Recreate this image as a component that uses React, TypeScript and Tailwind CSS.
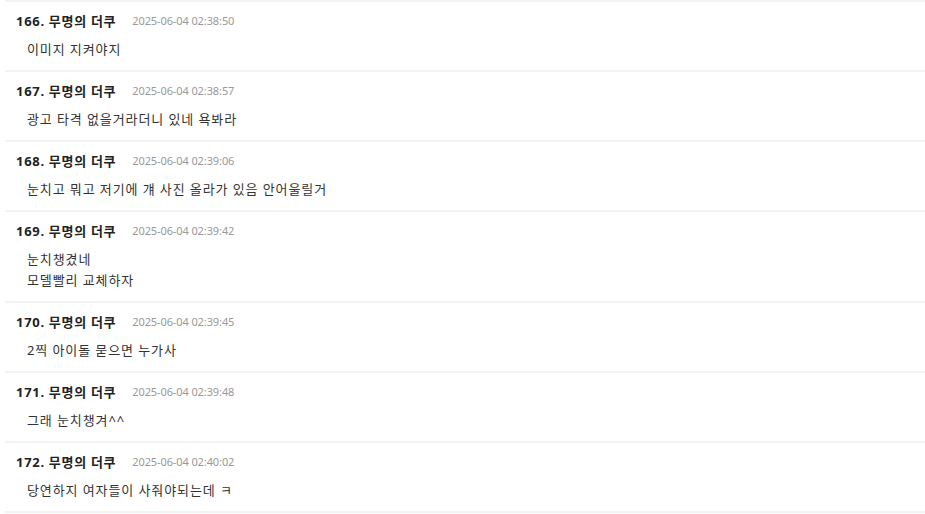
import React from "react";

const items: { n: number; date: string; lines: string[] }[] = [
  { n: 166, date: "2025-06-04 02:38:50", lines: ["이미지 지켜야지"] },
  { n: 167, date: "2025-06-04 02:38:57", lines: ["광고 타격 없을거라더니 있네 욕봐라"] },
  { n: 168, date: "2025-06-04 02:39:06", lines: ["눈치고 뭐고 저기에 걔 사진 올라가 있음 안어울릴거"] },
  { n: 169, date: "2025-06-04 02:39:42", lines: ["눈치챙겼네", "모델빨리 교체하자"] },
  { n: 170, date: "2025-06-04 02:39:45", lines: ["2찍 아이돌 묻으면 누가사"] },
  { n: 171, date: "2025-06-04 02:39:48", lines: ["그래 눈치챙겨^^"] },
  { n: 172, date: "2025-06-04 02:40:02", lines: ["당연하지 여자들이 사줘야되는데 ㅋ"] },
];

export default function App() {
  return (
    <div
      className="w-[925px] h-[514px] overflow-hidden bg-white"
      style={{ fontFamily: '"Noto Sans", "Noto Sans CJK KR", sans-serif' }}
    >
      <div className="ml-[5px] border-t-2 border-[#f3f3f3]">
        {items.map((it) => (
          <div key={it.n} className="border-b-2 border-[#f3f3f3] pl-[11px] pt-[9px] pb-[10px]">
            <div className="flex items-center h-[21px]">
              <span className="text-[13px] font-bold text-[#222] tracking-[0.7px]">
                {it.n}. 무명의 더쿠
              </span>
              <span className="ml-[16px] text-[11px] text-[#999] tracking-[-0.1px]">{it.date}</span>
            </div>
            <div className="mt-[7px] pl-[11px] text-[13px] leading-[21px] text-[#333] tracking-[0.9px]">
              {it.lines.map((l, i) => (
                <div key={i}>{l}</div>
              ))}
            </div>
          </div>
        ))}
      </div>
    </div>
  );
}
